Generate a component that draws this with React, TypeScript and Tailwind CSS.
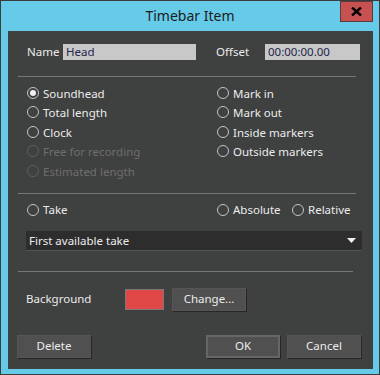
import React from "react";

const Radio = ({
  label,
  checked = false,
  disabled = false,
}: {
  label: string;
  checked?: boolean;
  disabled?: boolean;
}) => (
  <div className="flex items-center h-full">
    <span
      className={`w-[12px] h-[12px] rounded-full border-[1.5px] flex items-center justify-center ${
        disabled ? "border-[#5e5e5e]" : "border-[#c4c4c4]"
      }`}
    >
      {checked && <span className="w-[6px] h-[6px] rounded-full bg-[#f0f0f0]" />}
    </span>
    <span
      className={`ml-[4px] pt-[1px] ${disabled ? "text-[#6e6e6e]" : "text-[#ececec]"}`}
    >
      {label}
    </span>
  </div>
);

const Btn = ({
  children,
  isDefault = false,
  className = "",
}: {
  children: React.ReactNode;
  isDefault?: boolean;
  className?: string;
}) => (
  <button
    className={`h-[23px] w-[74px] bg-[#505050] text-[#ececec] shadow-[1px_1px_0_#262626] ${
      isDefault ? "border-2 border-[#666]" : "border border-[#555]"
    } ${className}`}
  >
    {children}
  </button>
);

export default function App() {
  return (
    <div
      className="relative w-[380px] h-[375px] bg-[#66cbe9] border border-[#3b3b3b] text-[11.5px] leading-none"
      style={{ fontFamily: '"Noto Sans", "Open Sans", sans-serif' }}
    >
      {/* Title */}
      <div className="h-[30px] flex items-center justify-center text-[14px] text-[#1b1b1b] pb-[1px]">
        Timebar Item
      </div>
      <button className="absolute top-0 right-[6px] w-[33px] h-[21px] bg-[#c75050] border border-[#5a3a3a] flex items-center justify-center">
        <svg width="11" height="9" viewBox="0 0 11 9">
          <path d="M1 0.5 L10 8.5 M10 0.5 L1 8.5" stroke="#000" strokeWidth="2.4" />
        </svg>
      </button>

      {/* Content */}
      <div className="ml-[7px] w-[365px] h-[338px] bg-[#3f4040] flex flex-col">
        {/* Name / Offset */}
        <div className="mt-[13px] h-[16px] flex items-center">
          <span className="ml-[19px] w-[36px] text-[#ececec]">Name</span>
          <div className="w-[133px] h-[16px] bg-[#c8c8c8] text-[#24244a] pl-[3px] flex items-center">
            Head
          </div>
          <span className="ml-[20px] w-[49px] text-[#ececec]">Offset</span>
          <div className="w-[95px] h-[16px] bg-[#c8c8c8] text-[#24244a] pl-[3px] flex items-center">
            00:00:00.00
          </div>
        </div>

        <div className="mt-[16px] ml-[10px] w-[338px] h-px bg-[#767676]" />

        {/* Radios */}
        <div className="mt-[6px] ml-[19px] flex">
          <div className="w-[190px] flex flex-col">
            <div className="h-[19.5px]"><Radio label="Soundhead" checked /></div>
            <div className="h-[19.5px]"><Radio label="Total length" /></div>
            <div className="h-[19.5px]"><Radio label="Clock" /></div>
            <div className="h-[19.5px]"><Radio label="Free for recording" disabled /></div>
            <div className="h-[19.5px]"><Radio label="Estimated length" disabled /></div>
          </div>
          <div className="flex flex-col">
            <div className="h-[19.5px]"><Radio label="Mark in" /></div>
            <div className="h-[19.5px]"><Radio label="Mark out" /></div>
            <div className="h-[19.5px]"><Radio label="Inside markers" /></div>
            <div className="h-[19.5px]"><Radio label="Outside markers" /></div>
          </div>
        </div>

        <div className="mt-[12px] ml-[10px] w-[338px] h-px bg-[#767676]" />

        {/* Take */}
        <div className="mt-[6px] h-[20px] ml-[19px] flex">
          <div className="w-[190px]"><Radio label="Take" /></div>
          <div className="w-[75px]"><Radio label="Absolute" /></div>
          <Radio label="Relative" />
        </div>

        <div className="mt-[11px] ml-[18px] w-[336px] h-[20px] bg-[#2d2d2d] border-b border-[#555] flex items-center justify-between pl-[3px] pr-[6px] pt-[1px] text-[#ececec]">
          <span>First available take</span>
          <svg width="9" height="5" viewBox="0 0 9 5">
            <path d="M0 0 H9 L4.5 5 Z" fill="#f0f0f0" />
          </svg>
        </div>

        <div className="mt-[20px] ml-[10px] w-[335px] h-px bg-[#767676]" />

        {/* Background */}
        <div className="mt-[16px] h-[23px] flex items-center">
          <span className="ml-[18px] w-[99px] text-[#ececec]">Background</span>
          <div className="w-[39px] h-[21px] bg-[#e04848] border border-[#7a7a7a]" />
          <Btn className="ml-[8px]">Change...</Btn>
        </div>

        {/* Buttons */}
        <div className="mt-[24px] flex">
          <Btn className="ml-[9px]">Delete</Btn>
          <Btn isDefault className="ml-[115px]">OK</Btn>
          <Btn className="ml-[7px]">Cancel</Btn>
        </div>
      </div>
    </div>
  );
}
